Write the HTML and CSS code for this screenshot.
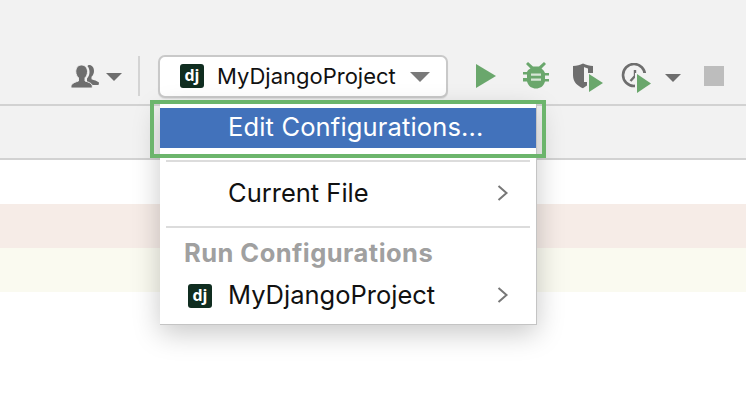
FILE: index.html
```html
<!DOCTYPE html>
<html lang="en">
<head>
<meta charset="utf-8">
<title>Run configurations</title>
<link rel="stylesheet" href="styles.css">
</head>
<body>
<div class="page">
  <header class="toolbar">
    <svg class="ic-user" viewBox="0 0 28 24"><path fill="#6e6e6e" d="M18 1c3 0 5 2.500 5 6 0 2.500-1 4.500-2.500 5.800v2.400c2.500 1 5.500 1.500 7.500 3.300 0 .8-.2 1.500-.5 2.500h-6c-1.500-1.500-3-2.500-5.500-3.300v-3.200c1.700-1.700 2.500-4 2.500-6.500 0-2.500-.8-4.500-2-5.800C17 1.200 17.500 1 18 1z"/><path fill="#6e6e6e" stroke="#f2f2f2" stroke-width=".9" d="M10.500 1c3.500 0 6 2.800 6 6.500 0 2.700-1 5-2.500 6.300v3.200c3 1 6.500 2 7 4 .3.700.3 1.500.3 3H0c0-1.500 0-2.300.4-3 1-2 4.100-3 7.100-4v-3.200C6 12.500 4.800 10.200 4.800 7.500 4.800 3.800 7 1 10.500 1z"/></svg>
    <span class="caret caret-user"></span>
    <span class="vsep"></span>
    <div class="combo">
      <span class="dj">dj</span>
      <span class="combo-label">MyDjangoProject</span>
      <span class="caret caret-combo"></span>
    </div>
    <svg class="ic-run" viewBox="0 0 20 24"><path fill="#6aa76c" d="M0 0l20 12L0 24z"/></svg>
    <svg class="ic-bug" viewBox="0 0 26 28"><path fill="#6aa76c" d="M5 0l5 4.500h6L21 0l2 2-4.500 4.500c2 1.500 3 3 3.500 4.500h4v2.500h-4v3.500h4v2.500h-4c-1.500 5-5 7-9 7s-7.500-2-9-7H0V16h4v-3.500H0V10h4c.5-1.500 1.500-2.500 3.500-3.500L3 2z"/><path fill="#d6e6d6" d="M8 11.500h10v2.200H8zM8 16.500h10v2.200H8z"/></svg>
    <svg class="ic-cover" viewBox="0 0 30 30"><path fill="#6e6e6e" d="M0 3c4 0 7-1 10-2.500 3.500 1.500 6.500 2.500 10 2.500v7h-5V5.500c-1-.2-3-1-4-1.500v20.500c-.5.500-1 .8-1 .8-5-2-10-6-10-13z"/><path fill="#6e6e6e" d="M11 19h3v3.500l-3 2z"/><path fill="#6aa76c" d="M16 11l14 9-14 9z"/></svg>
    <svg class="ic-prof" viewBox="0 0 30 30"><circle cx="13" cy="12" r="11" fill="none" stroke="#6e6e6e" stroke-width="2.600"/><path fill="none" stroke="#6e6e6e" stroke-width="2.400" d="M14 7v6l-4.500 5"/><path fill="#f2f2f2" d="M14 10h16v20H14z"/><path fill="#6aa76c" d="M16 11l14 9.500L16 30z"/></svg>
    <span class="caret caret-prof"></span>
    <span class="stop"></span>
  </header>
  <div class="tabbar"></div>
  <main class="editor">
    <div class="stripe stripe-red"></div>
    <div class="stripe stripe-yellow"></div>
  </main>

  <div class="highlight"></div>
  <nav class="menu">
    <div class="item item-active"><span class="lbl">Edit Configurations...</span></div>
    <div class="sep sep-first"></div>
    <div class="item item-file"><span class="lbl">Current File</span><svg class="chev" viewBox="0 0 12 16"><path d="M1.500 1l8 7-8 7"/></svg></div>
    <div class="sep"></div>
    <div class="group">Run Configurations</div>
    <div class="item item-proj"><span class="dj">dj</span><span class="lbl">MyDjangoProject</span><svg class="chev" viewBox="0 0 12 16"><path d="M1.500 1l8 7-8 7"/></svg></div>
  </nav>
</div>
</body>
</html>
```
FILE: styles.css
```css
* { box-sizing: border-box; }
html, body { margin: 0; padding: 0; }
body { font-family: Inter, "Liberation Sans", sans-serif; background: #fff; color: #111; }
.page { position: relative; width: 746px; height: 404px; overflow: hidden; }

.toolbar {
  height: 106px;
  background: #f2f2f2;
  border-bottom: 2px solid #d2d2d2;
  display: flex;
  align-items: center;
  padding: 53px 0 0 71px;
}
.ic-user { width: 28px; height: 24px; margin-top: -5px; flex: none; }
.caret { width: 0; height: 0; border-style: solid; border-color: #6e6e6e transparent transparent; flex: none; }
.caret-user { border-width: 8px 8px 0; margin: -3px 0 0 7px; }
.vsep { width: 2px; height: 40px; background: #d4d4d4; margin: -5px 0 0 16px; flex: none; }
.combo {
  width: 290px;
  height: 43px;
  flex: none;
  margin: -5px 0 0 18px;
  background: #fff;
  border: 2px solid #c9c9c9;
  border-radius: 7px;
  display: flex;
  align-items: center;
  padding-left: 20px;
  box-shadow: 0 1px 1px rgba(0,0,0,.08);
}
.dj {
  width: 24px;
  height: 24px;
  flex: none;
  background: #102d20;
  border-radius: 3px;
  color: #fff;
  font: 700 16px/22px "Open Sans", sans-serif;
  text-align: center;
}
.combo-label { font-size: 22px; margin-left: 13px; color: #111; }
.caret-combo { border-width: 10px 10px 0; border-top-color: #7a7a7a; margin: 2px 16px 0 auto; }
.ic-run { width: 20px; height: 24px; margin: -5px 0 0 28px; flex: none; }
.ic-bug { width: 26px; height: 28px; margin: -5px 0 0 27px; flex: none; }
.ic-cover { width: 30px; height: 30px; margin: -1px 0 0 24px; flex: none; }
.ic-prof { width: 30px; height: 30px; margin: -1px 0 0 18px; flex: none; }
.caret-prof { border-width: 8px 8px 0; margin: -2px 0 0 14px; }
.stop { width: 20px; height: 20px; background: #bdbdbd; margin: -5px 0 0 23px; flex: none; }

.tabbar { height: 54px; background: #f2f2f2; border-bottom: 2px solid #d2d2d2; }
.editor { padding-top: 44px; background: #fff; }
.stripe { height: 44px; }
.stripe-red { background: #f6ece7; }
.stripe-yellow { background: #fafaf0; }

.highlight {
  position: absolute;
  left: 150px; top: 100px;
  width: 396px; height: 58px;
  border: 4px solid #6cb56c;
  z-index: 2;
}
.menu {
  position: absolute;
  left: 160px; top: 104px;
  width: 377px; height: 221px;
  background: #fff;
  border-right: 1px solid #c4c4c4;
  border-bottom: 1px solid #c4c4c4;
  padding-top: 4px;
  box-shadow: 0 8px 26px rgba(0,0,0,.22);
  z-index: 1;
}
.item { display: flex; align-items: center; font-size: 25.5px; color: #111; }
.lbl { margin-bottom: 4px; }
.item-active {
  height: 40px;
  background: #4272bb;
  color: #fff;
  padding-left: 68px;
  letter-spacing: .15px;
}
.sep { height: 2px; background: #dcdcdc; margin: 0 6px; }
.sep-first { margin-top: 12px; }
.item-file { height: 64px; padding: 0 27px 0 68px; justify-content: space-between; }
.group { font-size: 25.5px; font-weight: 700; letter-spacing: .45px; color: #a0a0a0; margin-top: 10px; padding-left: 24px; height: 37px; line-height: 30px; }
.item-proj { height: 42px; padding: 0 27px 0 28px; }
.item-proj .dj { margin-right: 16px; }
.item-proj .chev { margin-left: auto; }
.chev { width: 12px; height: 16px; flex: none; margin-bottom: 2px; }
.chev path { fill: none; stroke: #777; stroke-width: 2; }
```
